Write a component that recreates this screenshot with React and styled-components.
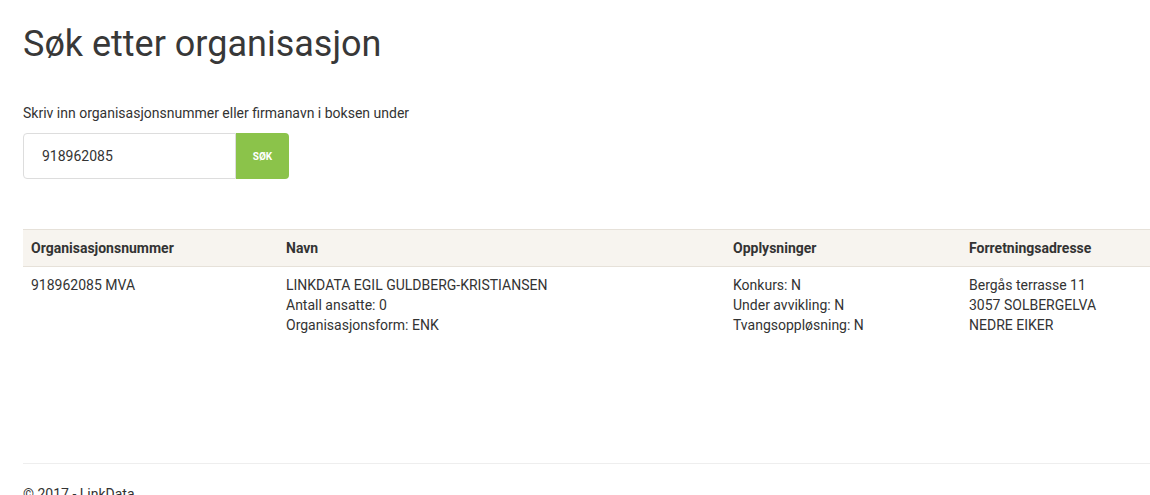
import React, { useState } from 'react';
import styled, { createGlobalStyle } from 'styled-components';

const GlobalStyle = createGlobalStyle`
  * { box-sizing: border-box; }
  body {
    margin: 0;
    font-family: Roboto, "Liberation Sans", sans-serif;
    font-size: 14px;
    line-height: 20px;
    color: #333;
    background: #fff;
  }
`;

const rows = [
  {
    orgnr: '918962085 MVA',
    navn: ['LINKDATA EGIL GULDBERG-KRISTIANSEN', 'Antall ansatte: 0', 'Organisasjonsform: ENK'],
    info: ['Konkurs: N', 'Under avvikling: N', 'Tvangsoppløsning: N'],
    adresse: ['Bergås terrasse 11', '3057 SOLBERGELVA', 'NEDRE EIKER'],
  },
];

const App = () => {
  const [query, setQuery] = useState('918962085');

  return (
    <>
      <GlobalStyle />
      <Page>
        <Title>Søk etter organisasjon</Title>
        <Hint>Skriv inn organisasjonsnummer eller firmanavn i boksen under</Hint>
        <SearchRow>
          <SearchInput value={query} onChange={e => setQuery(e.target.value)} />
          <SearchBtn>SØK</SearchBtn>
        </SearchRow>

        <Table>
          <thead>
            <tr>
              <Th width="255px">Organisasjonsnummer</Th>
              <Th width="447px">Navn</Th>
              <Th width="236px">Opplysninger</Th>
              <Th>Forretningsadresse</Th>
            </tr>
          </thead>
          <tbody>
            {rows.map(r => (
              <tr key={r.orgnr}>
                <Td>{r.orgnr}</Td>
                <Td>{r.navn.map(l => <Line key={l}>{l}</Line>)}</Td>
                <Td>{r.info.map(l => <Line key={l}>{l}</Line>)}</Td>
                <Td>{r.adresse.map(l => <Line key={l}>{l}</Line>)}</Td>
              </tr>
            ))}
          </tbody>
        </Table>

        <Footer>
          <p>© 2017 - LinkData</p>
        </Footer>
      </Page>
    </>
  );
};

export default App;

const Page = styled.div`
  padding: 0 0 0 23px;
  width: 1150px;
`;

const Title = styled.h1`
  margin: 0;
  padding-top: 20px;
  font-size: 36px;
  line-height: 48px;
  font-weight: 400;
  color: #383838;
`;

const Hint = styled.p`
  margin: 35px 0 0;
  line-height: 20px;
`;

const SearchRow = styled.div`
  display: flex;
  margin-top: 10px;
  height: 46px;
`;

const SearchInput = styled.input`
  width: 213px;
  height: 46px;
  padding: 0 18px;
  border: 1px solid #ddd;
  border-radius: 4px 0 0 4px;
  font-family: Roboto, "Liberation Sans", sans-serif;
  font-size: 14px;
  color: #333;
  outline: none;
`;

const SearchBtn = styled.button`
  width: 53px;
  height: 46px;
  border: none;
  border-radius: 0 4px 4px 0;
  background: #8bc34a;
  color: #fff;
  font-family: Roboto, "Liberation Sans", sans-serif;
  font-size: 10px;
  font-weight: 700;
  cursor: pointer;
`;

const Table = styled.table`
  margin-top: 50px;
  width: 1127px;
  border-collapse: collapse;
  table-layout: fixed;
`;

const Th = styled.th`
  width: ${({ width }) => width || 'auto'};
  height: 37px;
  padding: 8px;
  text-align: left;
  font-weight: 700;
  background: #f7f4ef;
  border-top: 1px solid #e6e1d9;
  border-bottom: 1px solid #e6e1d9;
  color: #333;
`;

const Td = styled.td`
  padding: 8px;
  vertical-align: top;
`;

const Line = styled.div`
  line-height: 20px;
`;

const Footer = styled.footer`
  margin-top: 120px;
  border-top: 1px solid #eee;

  p {
    margin: 20px 0 0;
    line-height: 20px;
  }
`;
